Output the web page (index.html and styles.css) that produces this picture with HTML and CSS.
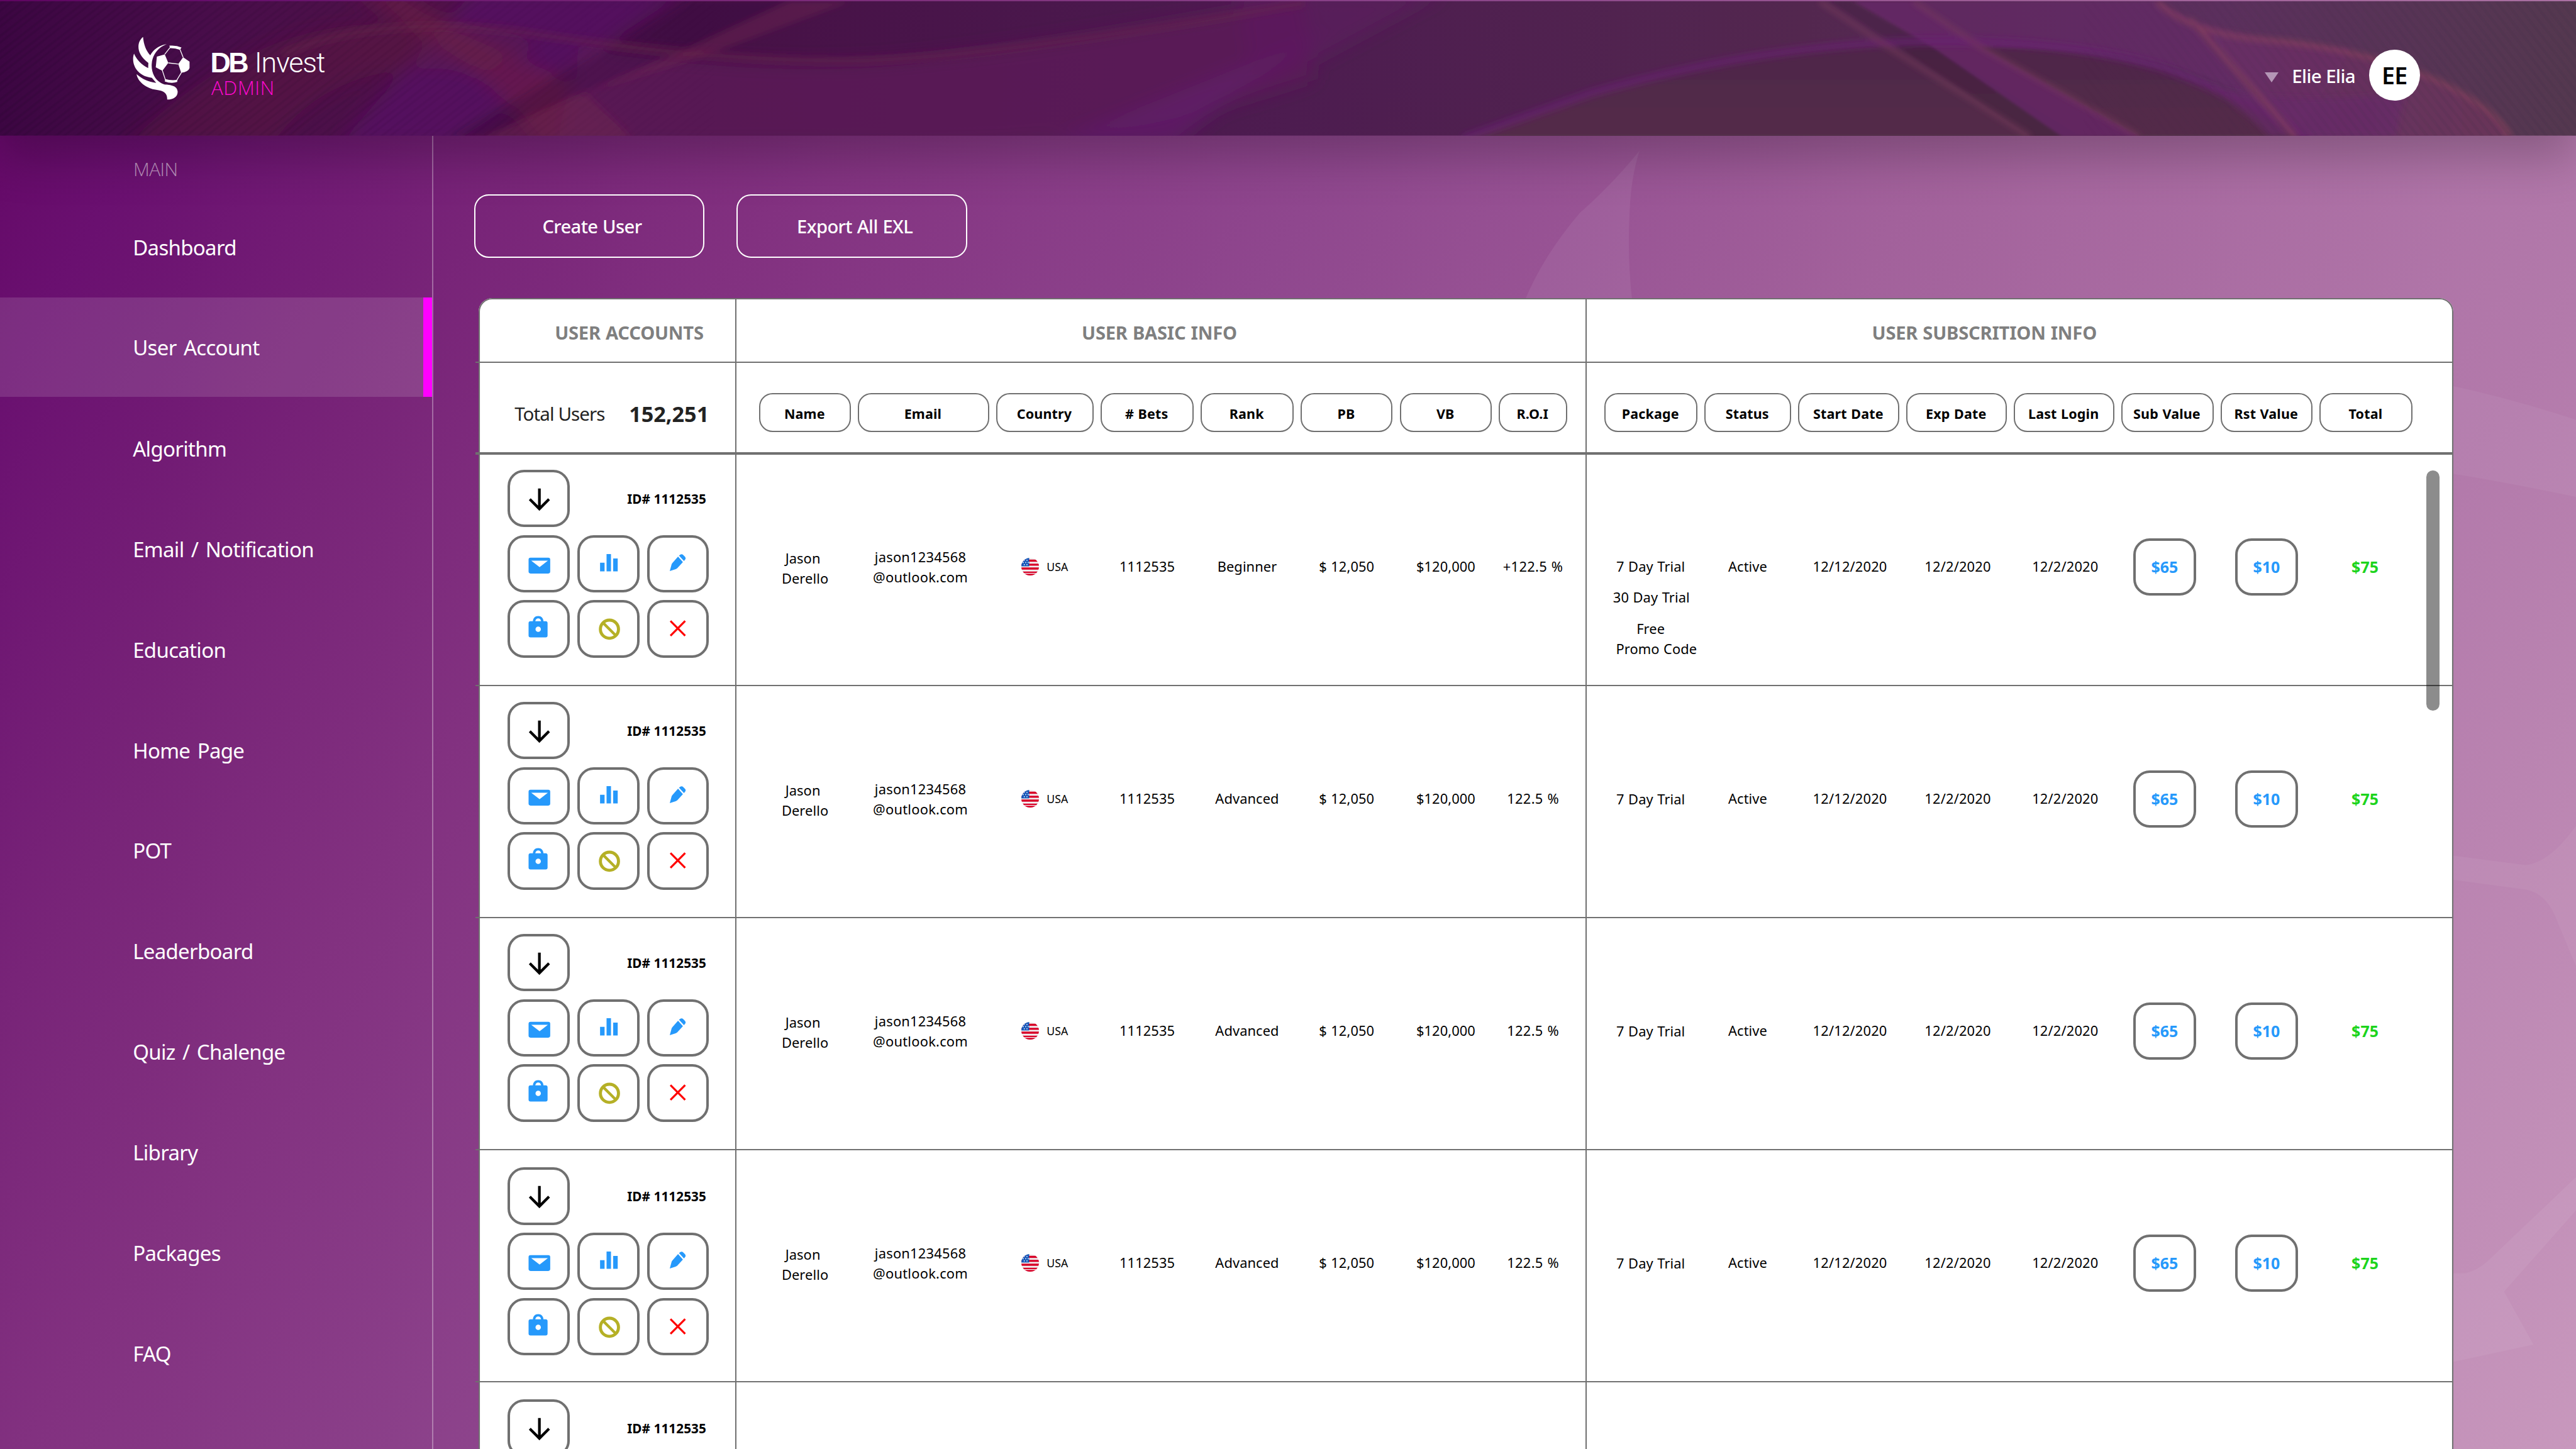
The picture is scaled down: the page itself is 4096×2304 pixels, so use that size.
FILE: index.html
```html
<!DOCTYPE html>
<html lang="en">
<head>
<meta charset="utf-8">
<title>DB Invest Admin</title>
<link rel="stylesheet" href="styles.css">
</head>
<body>
<svg class="sprite" aria-hidden="true">
  <symbol id="i-down" viewBox="0 0 120 109"><path d="M61 33.6V75M41 56l20 20 20-20" fill="none" stroke="#000" stroke-width="5.6"/></symbol>
  <symbol id="i-mail" viewBox="0 0 120 109"><path fill="#2699fb" fill-rule="evenodd" d="M42.5 41.4h37a4 4 0 0 1 4 4v25a4 4 0 0 1-4 4h-37a4 4 0 0 1-4-4v-25a4 4 0 0 1 4-4zM44 47.6L61.4 61 78.6 47.6z"/></symbol>
  <symbol id="i-bars" viewBox="0 0 120 109"><path fill="#2699fb" d="M42 52h9.4v18H42zM55.5 34h9.2v36h-9.2zM69.3 43h9.4v27h-9.4z"/></symbol>
  <symbol id="i-pen" viewBox="0 0 120 109"><path fill="#2699fb" d="M42.5 69.5l4-14.5 1.5-2.5L60 39l10.300 11.700L58 64l-3 1.700zM62 37l3-2.300q3-1.600 6 .8l4 4.200q2 3 0 5.500l-2.500 3.200z"/></symbol>
  <symbol id="i-lock" viewBox="0 0 120 109"><path fill="#2699fb" fill-rule="evenodd" d="M42.500 39h5C48 32 52 28 58.500 28S69 32 69.500 39h4.500a4 4 0 0 1 4 4v25.500a4 4 0 0 1-4 4H42.500a4 4 0 0 1-4-4V43a4 4 0 0 1 4-4zM52.500 39h12q-1-6-6-6t-6 6zM58.500 50a5.600 5.600 0 1 0 0 11.200 5.600 5.600 0 0 0 0-11.200z"/></symbol>
  <symbol id="i-ban" viewBox="0 0 120 109"><g fill="none" stroke="#b5b026"><circle cx="61.500" cy="55.500" r="18.800" stroke-width="6.400"/><path d="M48 42l27 27" stroke-width="5.600"/></g></symbol>
  <symbol id="i-x" viewBox="0 0 120 109"><path d="M44 38l31 31.500M75 38L44 69.500" fill="none" stroke="#f00" stroke-width="4.200"/></symbol>
  <symbol id="i-usa" viewBox="0 0 36 36">
    <clipPath id="round"><circle cx="18" cy="18" r="18"/></clipPath>
    <g clip-path="url(#round)"><path fill="#f0f0f0" d="M0 0h36v36H0z"/><path fill="#d80027" d="M0 3.500h36v4.500H0zM0 12h36v4H0zM0 19.500h36V24H0zM0 28h36v9H0z"/><path fill="#f0f0f0" d="M0 31h36v1.500H0z"/><path fill="#1456b8" d="M0 0h16v17.500H0z"/><path fill="#e6eefc" d="M5 4h2v2H5zM10.500 4h2v2h-2zM3 8.500h2v2H3zM8 8.500h2v2H8zM13 8.500h2v2h-2zM5 13h2v2H5zM10.500 13h2v2h-2z"/></g>
  </symbol>
</svg>

<svg class="watermark" viewBox="0 0 5334 3000" preserveAspectRatio="none" aria-hidden="true">
  <path fill="#fff" fill-opacity=".065" d="M3395 312Q3376 370 3374 450Q3370 540 3380 625H3156Q3195 530 3271 441Q3340 380 3395 312z"/>
  <g fill="#fff" fill-opacity=".05">
    <path d="M5060 795Q5200 825 5334 869V1029Q5200 1000 5060 978z"/>
    <path d="M5060 1769L5230 1791Q5280 1785 5334 1710V2000L5290 1895Q5270 1850 5232 1842L5060 1819z"/>
    <path fill-opacity=".06" d="M5060 2636H5105Q5130 2630 5150 2612L5334 2437V2506L5185 2674L5246 2784L5060 2824z"/>
  </g>
</svg>

<header class="topbar">
  <svg class="topbar-art" viewBox="0 0 5334 279" preserveAspectRatio="none" aria-hidden="true">
    <defs>
      <linearGradient id="base"><stop offset="0" stop-color="#3c0642"/><stop offset=".08" stop-color="#480d4a"/><stop offset=".17" stop-color="#4f1248"/><stop offset=".27" stop-color="#461046"/><stop offset=".5" stop-color="#4d1c50"/><stop offset=".7" stop-color="#53274f"/><stop offset=".86" stop-color="#5b2f5d"/><stop offset="1" stop-color="#54384f"/></linearGradient>
      <linearGradient id="dome" x1="0" y1="0" x2="0" y2="1"><stop offset="0" stop-color="#4f2648"/><stop offset="1" stop-color="#532d48"/></linearGradient>
      <linearGradient id="wing" x1="0" y1="0" x2="1" y2="0"><stop offset="0" stop-color="#682a68"/><stop offset="1" stop-color="#70365c"/></linearGradient>
      <pattern id="grainL" width="26" height="26" patternUnits="userSpaceOnUse" patternTransform="rotate(-38)"><path d="M0 5h26M0 16h26" stroke="#1d0626" stroke-width="4"/></pattern>
      <pattern id="grainR" width="30" height="30" patternUnits="userSpaceOnUse" patternTransform="rotate(52)"><path d="M0 7h30M0 22h30" stroke="#42304a" stroke-width="6"/></pattern>
      <filter id="s6" x="-20%" y="-40%" width="140%" height="180%"><feGaussianBlur stdDeviation="6"/></filter>
      <filter id="s2" x="-20%" y="-40%" width="140%" height="180%"><feGaussianBlur stdDeviation="2.500"/></filter>
      <filter id="s14" x="-20%" y="-40%" width="140%" height="180%"><feGaussianBlur stdDeviation="18"/></filter>
      <linearGradient id="fadeL"><stop offset="0" stop-color="#fff"/><stop offset="1" stop-color="#000"/></linearGradient>
      <linearGradient id="fadeR"><stop offset="0" stop-color="#000"/><stop offset="1" stop-color="#fff"/></linearGradient>
      <mask id="mL"><path fill="url(#fadeL)" d="M0 0h1500v279H0z"/></mask>
      <mask id="mR"><path fill="url(#fadeR)" d="M4300 0h1034v279H4300z"/></mask>
    </defs>
    <path fill="url(#base)" d="M0 0h5334v279H0z"/>
    <g filter="url(#s14)">
      <path fill="#560e64" fill-opacity=".8" d="M980 -20h440L930 300H700z"/>
      <path fill="#60203c" fill-opacity=".35" d="M260 300Q500 60 760 48T1120 90L1000 150Q700 100 560 300z"/>
      <path fill="#6e2046" fill-opacity=".6" d="M720 -20h110Q960 80 1150 150L1330 300H1120Q1000 120 720 -20z"/>
      <path fill="#5e1c58" fill-opacity=".75" d="M1200 90Q1600 150 1900 118T2700 -10L2720 160Q2300 300 2000 300H1150z"/>
      <path fill="#601c68" fill-opacity=".8" d="M2160 300L2760 60L2560 190L2430 300z"/>
      <path fill="#5d1b60" fill-opacity=".6" d="M2560 -20h430L2600 190z"/>
    </g>
    <g filter="url(#s6)">
      <path fill="#6d2150" fill-opacity=".45" d="M1636 0L1412 104L1205 194L999 285H1310L1215 190L1440 120L1760 0z"/>
      <path fill="#2c0a30" fill-opacity=".2" d="M1430 0H1630L1410 104L1180 200L1000 279H930L1240 110z"/>
      <path fill="none" stroke="#68244c" stroke-opacity=".4" stroke-width="16" d="M585 110Q790 20 1120 70T1722 124T2700 4"/>
    </g>
    <g filter="url(#s2)">
      <path fill="url(#dome)" d="M3030 285L3297 192Q3646 94 3960 90T4483 143Q4640 200 4780 285z"/>
      <path fill="#3a1c38" fill-opacity=".35" d="M3790 0L3930 94L4204 281H4310L4000 94L3830 0z"/>
      <path fill="#662568" fill-opacity=".8" d="M3840 0H3962L4100 94L4431 281H4270L4000 94z"/>
      <path fill="#662a6a" fill-opacity=".55" d="M3962 0H4466Q4550 70 4867 98L4753 281Q4600 110 4256 100L4100 94z"/>
      <path fill="url(#wing)" fill-opacity=".7" d="M4466 0Q4530 66 4692 78T5006 147Q5160 210 5198 281H4753L4535 37z"/>
    </g>
    <g filter="url(#s6)">
      <path fill="none" stroke="#68206f" stroke-opacity=".6" stroke-width="18" d="M3030 285L3297 190Q3646 92 3960 84T4483 140Q4640 198 4780 285"/>
      <path fill="#672668" fill-opacity=".7" d="M4700 281Q4640 220 4560 170Q4720 220 4980 190L4960 281z"/>
      <path fill="none" stroke="#7b3a5c" stroke-opacity=".6" stroke-width="9" d="M3768 0L3908 94L4204 281M3962 0L4100 94L4431 281"/>
      <path fill="none" stroke="#88445a" stroke-opacity=".65" stroke-width="11" d="M4466 0Q4530 66 4692 80T5006 147Q5160 210 5198 281M4535 37L4622 135L4753 281"/>
    </g>
    <path fill="url(#grainL)" fill-opacity=".14" mask="url(#mL)" d="M0 0h1500v279H0z"/>
    <path fill="url(#grainR)" fill-opacity=".16" mask="url(#mR)" d="M4300 0h1034v279H4300z"/>
  </svg>
  <div class="brand">
    <svg class="brand-mark" viewBox="40 45 365 400" aria-hidden="true">
      <path fill="#fff" d="M255 97C205 105 172 132 153 166C125 135 113 100 108 52C72 80 58 152 141 213L140 245C100 225 70 195 52 155C35 200 52 290 163 306L190 337C140 330 105 315 68 283C75 330 130 372 190 380C235 386 260 400 258 441C300 440 325 420 323 390C320 355 280 350 240 347C190 332 158 280 162 220C166 160 205 115 255 97z"/>
      <path fill="#fff" d="M272 106Q312 102 347 117L338 132Q308 120 275 121zM194 174L243 160L265 213L228 262L187 240zM357 178L397 205V245Q390 268 345 275L327 220zM246 314Q285 324 322 318L320 331Q285 344 243 328z"/>
      <path fill="none" stroke="#fff" stroke-width="5" d="M275 119L243 160M338 130L357 178M265 213L327 220M228 260L247 318M347 272L318 320"/>
    </svg>
    <div class="brand-text">
      <div class="brand-name"><b>DB</b><span>Invest</span></div>
      <div class="brand-sub">ADMIN</div>
    </div>
  </div>
  <div class="account">
    <span class="caret"></span>
    <span class="account-name">Elie Elia</span>
    <span class="avatar">EE</span>
  </div>
</header>

<div class="shell">
  <nav class="sidebar">
    <div class="nav-title">MAIN</div>
    <a class="nav-item">Dashboard</a>
    <a class="nav-item active">User Account</a>
    <a class="nav-item">Algorithm</a>
    <a class="nav-item">Email / Notification</a>
    <a class="nav-item">Education</a>
    <a class="nav-item">Home Page</a>
    <a class="nav-item">POT</a>
    <a class="nav-item">Leaderboard</a>
    <a class="nav-item">Quiz / Chalenge</a>
    <a class="nav-item">Library</a>
    <a class="nav-item">Packages</a>
    <a class="nav-item">FAQ</a>
  </nav>
  <main class="main">
    <div class="toolbar">
      <button class="outline-btn">Create User</button>
      <button class="outline-btn">Export All EXL</button>
    </div>
    <section class="table" id="table">
      <div class="row groups">
        <div class="col g1">USER ACCOUNTS</div>
        <div class="col g2">USER BASIC INFO</div>
        <div class="col g3">USER SUBSCRITION INFO</div>
      </div>
      <div class="row heads">
        <div class="col totals"><span class="totals-label">Total Users</span><span class="totals-num">152,251</span></div>
        <div class="col basic"><span class="chip">Name</span><span class="chip">Email</span><span class="chip">Country</span><span class="chip"># Bets</span><span class="chip">Rank</span><span class="chip">PB</span><span class="chip">VB</span><span class="chip">R.O.I</span></div>
        <div class="col subs"><span class="chip">Package</span><span class="chip">Status</span><span class="chip">Start Date</span><span class="chip">Exp Date</span><span class="chip">Last Login</span><span class="chip">Sub Value</span><span class="chip">Rst Value</span><span class="chip">Total</span></div>
      </div>
      <div class="scrollbar"></div>
    </section>
  </main>
</div>
<script src="rows.js"></script>
</body>
</html>
```
FILE: rows.js
```js
const users = [
  { rank: "Beginner", roi: "+122.5 %", more: true },
  { rank: "Advanced", roi: "122.5 %" },
  { rank: "Advanced", roi: "122.5 %" },
  { rank: "Advanced", roi: "122.5 %" }
];

const icon = name => `<button class="act"><svg><use href="#i-${name}"/></svg></button>`;

const morePackages = `<span class="p30">30 Day Trial</span><span class="free">Free</span><span class="promo">Promo Code</span>`;

const rows = users.map(u => `
  <div class="row user">
    <div class="col actions">
      ${icon("down")}<span class="uid">ID# 1112535</span>
      ${icon("mail")}${icon("bars")}${icon("pen")}
      ${icon("lock")}${icon("ban")}${icon("x")}
    </div>
    <div class="col basic">
      <span class="cell name"><i>Jason</i><i>Derello</i></span>
      <span class="cell email"><i>jason1234568</i><i>@outlook.com</i></span>
      <span class="cell country"><svg><use href="#i-usa"/></svg>USA</span>
      <span class="cell">1112535</span>
      <span class="cell">${u.rank}</span>
      <span class="cell">$ 12,050</span>
      <span class="cell">$120,000</span>
      <span class="cell roi">${u.roi}</span>
    </div>
    <div class="col subs">
      <span class="cell pkg"><span>7 Day Trial</span>${u.more ? morePackages : ""}</span>
      <span class="cell">Active</span>
      <span class="cell date">12/12/2020</span>
      <span class="cell date">12/2/2020</span>
      <span class="cell date">12/2/2020</span>
      <span class="cell sub"><b class="money">$65</b></span>
      <span class="cell"><b class="money">$10</b></span>
      <span class="cell total">$75</span>
    </div>
  </div>`);

// The next row only peeks in at the bottom of the list.
rows.push(`
  <div class="row user peek">
    <div class="col actions">${icon("down")}<span class="uid">ID# 1112535</span></div>
    <div class="col"></div>
    <div class="col"></div>
  </div>`);

document.getElementById("table").insertAdjacentHTML("beforeend", rows.join(""));
```
FILE: styles.css
```css
html { font-size: 76.79px; }
* { box-sizing: border-box; }
body {
  margin: 0;
  width: 100vw;
  height: 100vh;
  overflow: hidden;
  position: relative;
  display: flex;
  flex-direction: column;
  font-family: "Noto Sans", "Open Sans", sans-serif;
  color: #000;
  background: linear-gradient(121deg, #620664 0%, #6a1070 6.7%, #782478 17.6%, #823180 26%, #8f478e 41.5%, #a2619b 58.8%, #b37aab 80%, #c898bd 100%);
}
button { font: inherit; background: none; padding: 0; }
i { font-style: normal; }
.sprite { position: absolute; width: 0; height: 0; }
.watermark { position: absolute; left: 0; top: 0; width: 100%; height: 100%; }

/* top bar */
.topbar {
  position: relative;
  z-index: 2;
  margin-top: .027rem;
  height: 2.783rem;
  flex: none;
  display: flex;
  justify-content: space-between;
  align-items: flex-start;
  padding: 0 3.23rem 0 2.74rem;
  box-shadow: 0 .45rem .9rem rgba(0, 0, 0, .22);
}
.topbar-art { position: absolute; left: 0; top: 0; width: 100%; height: 100%; }
.brand { position: relative; display: flex; }
.brand-mark { width: 1.217rem; height: 1.333rem; margin-top: .72rem; }
.brand-text { margin: .95rem 0 0 .4rem; }
.brand-name { color: #fff; font-size: .585rem; line-height: .6rem; height: .6rem; white-space: nowrap; }
.brand-name b { font-family: "Liberation Sans", sans-serif; font-weight: 700; letter-spacing: -.05rem; margin-right: .17rem; }
.brand-name span { font-family: Roboto, sans-serif; font-weight: 300; letter-spacing: -.015rem; }
.brand-sub { color: #ff08d0; font-family: "Open Sans", sans-serif; font-weight: 300; font-size: .405rem; line-height: .5rem; letter-spacing: .008rem; margin: -.01rem 0 0 .02rem; }
.account { position: relative; display: flex; align-items: center; height: 1.06rem; margin-top: 1rem; color: #fff; }
.caret { border: .155rem solid transparent; border-top: .22rem solid #b496b6; border-bottom: 0; margin-right: .28rem; margin-top: .1rem; }
.account-name { font-size: .385rem; font-weight: 500; margin: .03rem .28rem 0 0; letter-spacing: -.008rem; white-space: nowrap; }
.avatar { width: 1.06rem; height: 1.06rem; border-radius: 50%; background: #fff; color: #000; font-size: .49rem; font-weight: 600; display: flex; align-items: center; justify-content: center; letter-spacing: -.01rem; }

/* sidebar */
.shell { display: flex; flex: 1; min-height: 0; position: relative; }
.sidebar { width: 8.97rem; flex: none; border-right: .027rem solid rgba(255, 255, 255, .32); color: #fff; }
.nav-title { height: 1.27rem; padding: .41rem 0 0 2.76rem; line-height: .56rem; font-family: "Open Sans", sans-serif; font-weight: 300; font-size: .39rem; color: rgba(255, 255, 255, .55); letter-spacing: -.008rem; }
.nav-item { display: flex; align-items: center; height: 2.083rem; padding-left: 2.75rem; font-size: .43rem; letter-spacing: -.009rem; word-spacing: .045rem; white-space: nowrap; border-right: .185rem solid transparent; }
.nav-item.active { height: 2.05rem; margin-bottom: .033rem; padding-top: .025rem; background: rgba(255, 255, 255, .13) padding-box; border-right-color: #f0f; }

/* content */
.main { flex: 1; padding: 1.21rem 0 0 .845rem; min-width: 0; overflow: hidden; }
.toolbar { display: flex; gap: .67rem; }
.outline-btn { width: 4.77rem; height: 1.315rem; border: .035rem solid #fff; border-radius: .3rem; color: #fff; font-size: .38rem; font-weight: 500; padding: .03rem 0 0 .12rem; letter-spacing: -.008rem; word-spacing: .01rem; }

.table { position: relative; width: 40.9rem; margin: .835rem 0 0 .09rem; padding-bottom: .2rem; background: #fff; border-radius: .28rem .28rem 0 0; box-shadow: inset 0 0 0 .027rem #707070; }
.row { display: grid; grid-template-columns: 5.4rem 17.61rem 1fr; margin-left: -.06rem; border-bottom: .027rem solid #707070; }
.col { border-right: .027rem solid #707070; }
.col:last-child { border-right: 0; }
.groups { height: 1.34rem; color: #7f7f7f; font-weight: 700; font-size: .38rem; letter-spacing: -.003rem; word-spacing: .01rem; }
.groups .col { display: flex; align-items: center; justify-content: center; padding-top: .115rem; }
.groups .g1 { justify-content: flex-end; padding-right: .65rem; }
.groups .g2 { padding-right: .06rem; }
.groups .g3 { padding-right: 1.48rem; }
.heads { height: 1.887rem; border-bottom-width: .045rem; box-shadow: 0 .014rem 0 #707070; }
.totals { display: flex; align-items: center; padding: .25rem .54rem 0 .81rem; justify-content: space-between; color: #222; white-space: nowrap; }
.totals-label { font-size: .385rem; letter-spacing: -.012rem; }
.totals-num { font-size: .445rem; font-weight: 700; letter-spacing: 0; }

.basic, .subs { display: grid; column-gap: .145rem; align-items: center; }
.basic { grid-template-columns: 1.89rem 2.72rem 2.02rem 1.93rem 1.92rem 1.91rem 1.91rem 1.41rem; padding-left: .48rem; }
.subs { grid-template-columns: 1.92rem 1.8rem 2.095rem 2.08rem 2.08rem 1.91rem 1.91rem 1.92rem; padding-left: .37rem; }
.heads .basic, .heads .subs { padding-top: .22rem; }
.chip { height: .8rem; border: .027rem solid #707070; border-radius: .28rem; display: flex; align-items: center; justify-content: center; padding: .03rem .02rem 0 0; font-size: .28rem; font-weight: 700; letter-spacing: .002rem; word-spacing: .01rem; white-space: nowrap; }

.user { height: 4.806rem; }
.peek { height: 1.36rem; border-bottom: 0; }
.peek .col { margin-bottom: -.2rem; }
.actions { display: grid; grid-template-columns: 1.3rem 1.3rem 1.28rem; grid-template-rows: 1.19rem 1.19rem 1.19rem; column-gap: .145rem; row-gap: .16rem; padding: .33rem 0 0 .66rem; }
.user:nth-child(n+7) .actions { padding-top: .36rem; }
.peek .actions { grid-template-rows: 1.19rem; }
.act { border: .054rem solid #707070; border-radius: .34rem; }
.act svg { display: block; width: 100%; height: 100%; }
.uid { grid-column: span 2; align-self: center; justify-self: end; padding-right: .05rem; font-weight: 700; font-size: .27rem; letter-spacing: .001rem; }

.cell { font-size: .285rem; line-height: .42rem; padding-bottom: .1rem; text-align: center; white-space: nowrap; letter-spacing: .001rem; word-spacing: .01rem; }
.cell i { display: block; }
.name { padding-bottom: .03rem; }
.name i:first-child { padding-right: .09rem; }
.email { padding: 0 .12rem .08rem 0; letter-spacing: .003rem; }
.country { display: flex; align-items: center; justify-content: center; font-size: .23rem; }
.country svg { width: .365rem; height: .365rem; margin-right: .16rem; }
.date { padding-left: .05rem; letter-spacing: .002rem; }
.roi { letter-spacing: .004rem; }
.pkg { align-self: start; padding: 2.135rem .01rem 0 0; display: flex; flex-direction: column; align-items: center; }
.p30 { margin-top: .215rem; padding-left: .03rem; }
.free { margin-top: .225rem; }
.promo { padding-left: .24rem; }
.money { display: inline-flex; align-items: center; justify-content: center; width: 1.3rem; height: 1.19rem; border: .054rem solid #707070; border-radius: .34rem; color: #2699fb; font-size: .325rem; letter-spacing: 0; }
.sub { padding-right: .11rem; }
.total { font-size: .325rem; font-weight: 700; color: #1cd41c; padding-right: .04rem; }
.scrollbar { position: absolute; z-index: 3; right: .285rem; top: 3.57rem; width: .285rem; height: 4.97rem; border-radius: .143rem; background: rgba(0, 0, 0, .45); }
```
